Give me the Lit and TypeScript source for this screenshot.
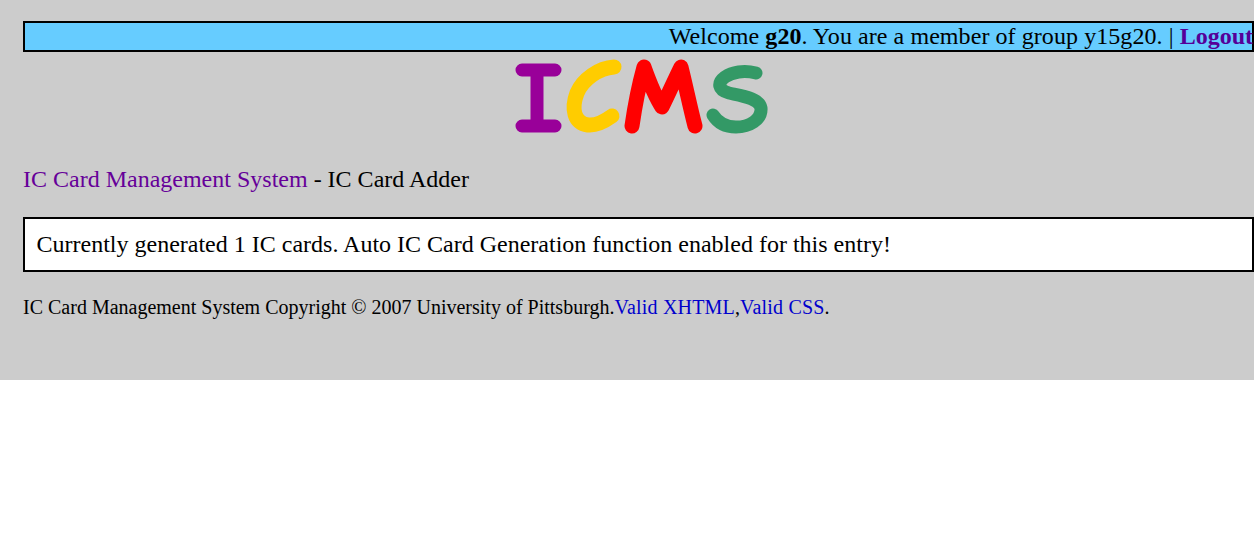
import { LitElement, html, css } from "lit";
import { customElement } from "lit/decorators.js";

@customElement("app-root")
export class AppRoot extends LitElement {
  static styles = css`
    :host {
      display: block;
      box-sizing: border-box;
      height: 380px;
      padding: 21px 0 0 23px;
      background: #cccccc;
      color: #000;
      font-family: "Liberation Serif", "Times New Roman", serif;
      font-size: 24px;
    }

    a {
      text-decoration: none;
    }

    .user-bar {
      box-sizing: border-box;
      height: 31px;
      line-height: 27px;
      border: 2px solid #000;
      background: #66ccff;
      text-align: right;
      white-space: nowrap;
      letter-spacing: 0.07px;
    }

    .user-bar a {
      color: #550099;
      font-weight: bold;
      letter-spacing: 0;
      margin-right: -1px;
    }

    .logo {
      display: flex;
      justify-content: center;
      padding: 6px 0 0 7px;
    }

    .logo svg {
      display: block;
    }

    .title {
      margin: 27px 0 0;
      line-height: 32px;
    }

    .title a {
      color: #660099;
    }

    .message {
      box-sizing: border-box;
      height: 55px;
      margin-top: 22px;
      padding: 0 11.5px;
      line-height: 51px;
      border: 2px solid #000;
      background: #fff;
    }

    .footer {
      margin: 23px 0 0;
      font-size: 20px;
      line-height: 24px;
    }

    .footer a {
      color: #0000cc;
      letter-spacing: 0.2px;
    }
  `;

  render() {
    return html`
      <div class="user-bar">
        Welcome <b>g20</b>. You are a member of group y15g20. |
        <a href="#">Logout</a>
      </div>
      <div class="logo">
        <svg width="258" height="78" viewBox="514 57 258 78" fill="none" stroke-linecap="round" stroke-linejoin="round">
          <path d="M523 69 H556 M538 69 V125 M523 125 H556" stroke="#990099" stroke-width="13" />
          <path d="M615 66 C600 67 584 78 578 92 C572 108 575 122 589 124 C598 125 606 120 613 115" stroke="#ffcc00" stroke-width="15" />
          <path d="M633 125 C636 104 640 84 645 66 C650 80 655 94 663 106 C670 92 676 78 682 66 C687 86 691 106 696 125" stroke="#ff0000" stroke-width="15" />
          <path d="M757 72 C745 69 733 71 726 76 C718 82 719 89 730 92 C744 95 760 97 762 107 C763 119 750 126 737 126 C727 126 719 122 714 114" stroke="#339966" stroke-width="13" />
        </svg>
      </div>
      <p class="title"><a href="#">IC Card Management System</a> - IC Card Adder</p>
      <div class="message">Currently generated 1 IC cards. Auto IC Card Generation function enabled for this entry!</div>
      <p class="footer">
        IC Card Management System Copyright © 2007 University of Pittsburgh.<a href="#">Valid XHTML</a>,<a href="#">Valid CSS</a>.
      </p>
    `;
  }
}
